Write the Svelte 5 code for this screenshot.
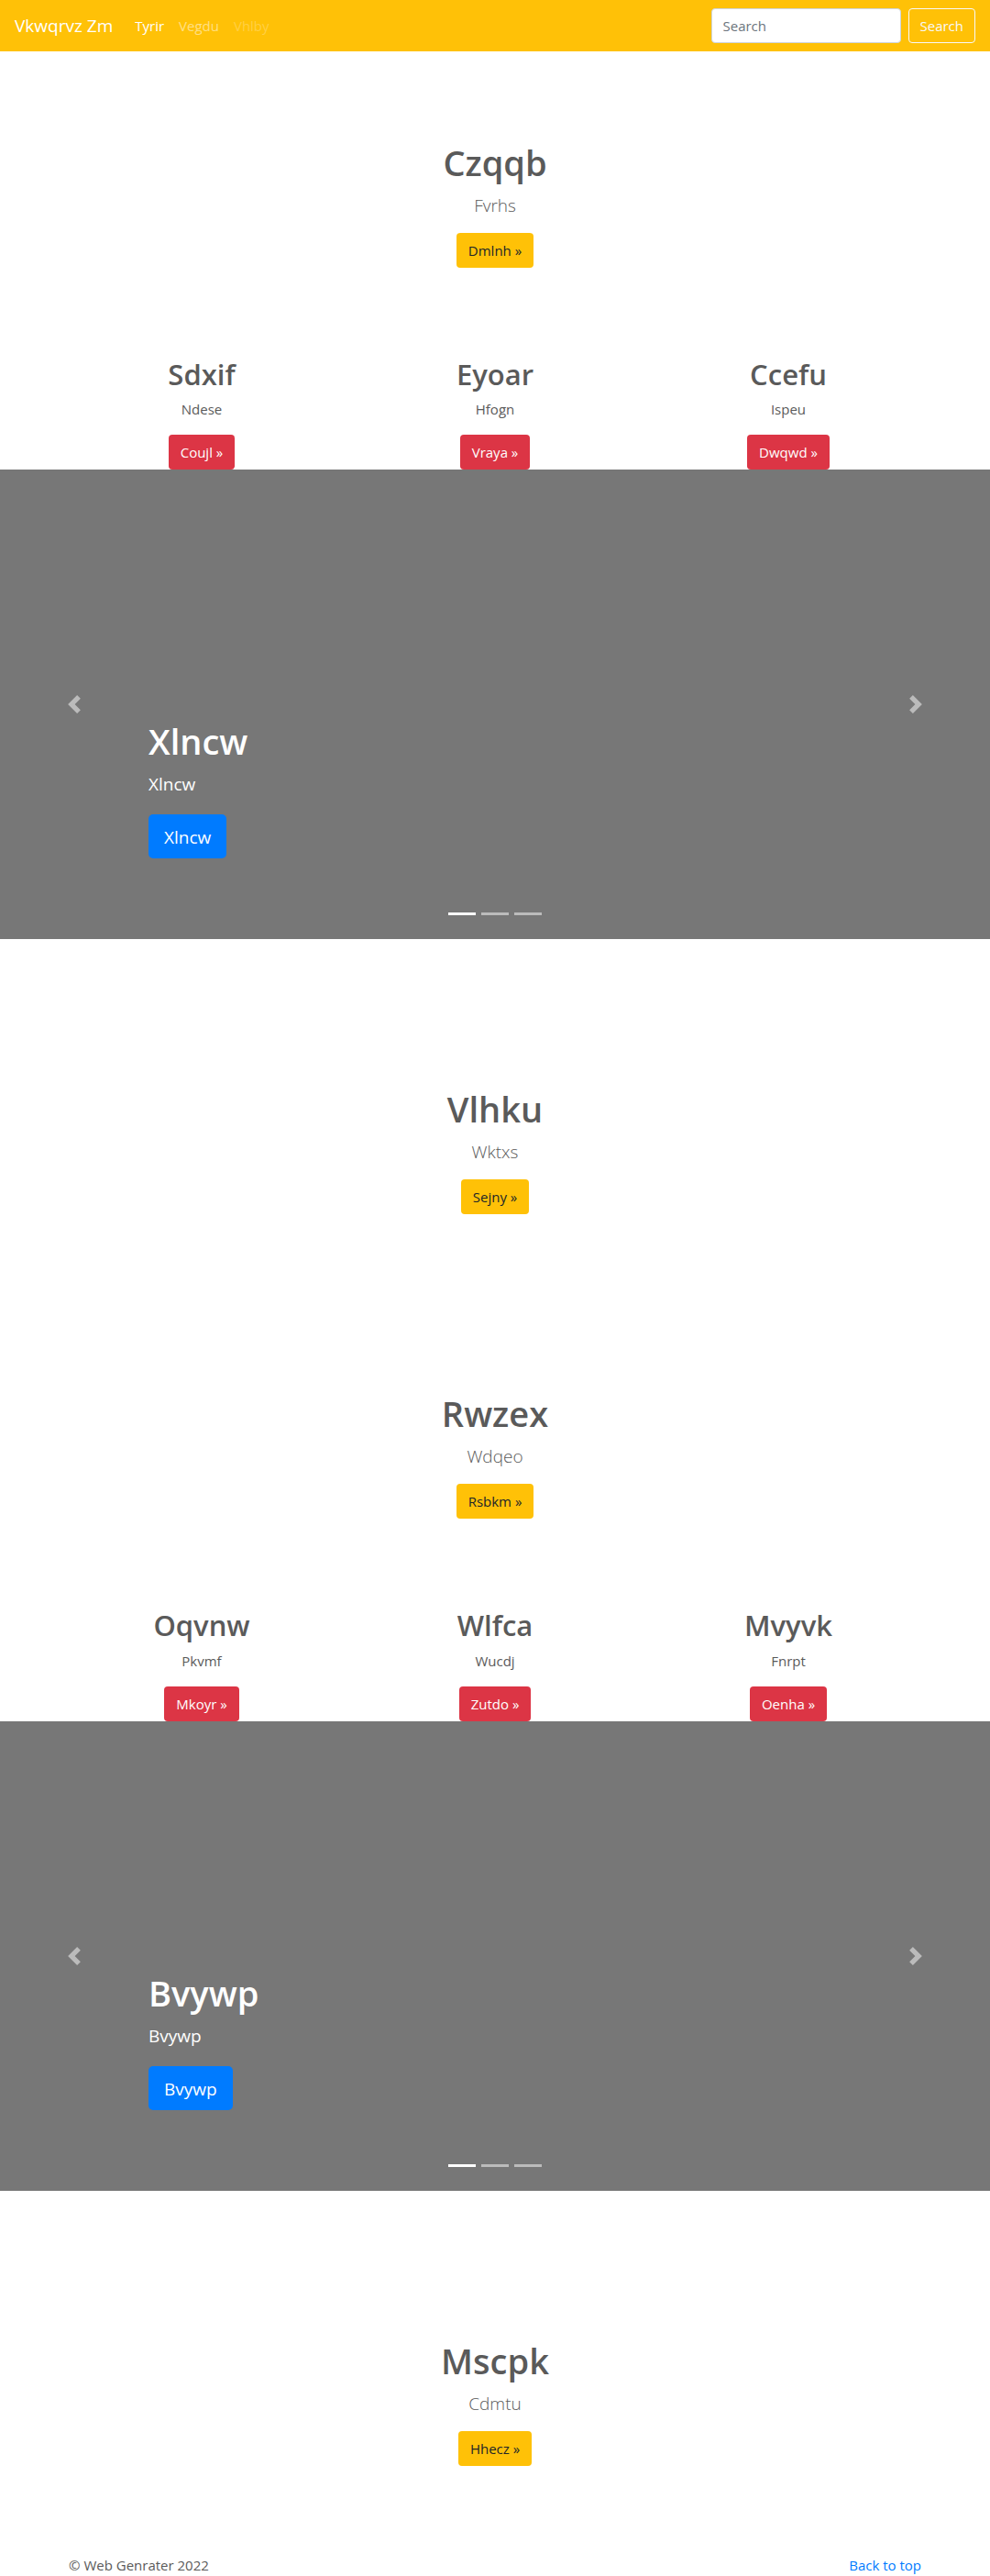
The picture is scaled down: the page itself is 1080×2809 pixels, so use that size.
<script>
  const navLinks = [
    { label: 'Tyrir', state: 'active' },
    { label: 'Vegdu', state: 'idle' },
    { label: 'Vhlby', state: 'disabled' },
  ];

  const sections = [
    { kind: 'hero', title: 'Czqqb', text: 'Fvrhs', action: 'Dmlnh' },
    {
      kind: 'columns',
      items: [
        { title: 'Sdxif', text: 'Ndese', action: 'Coujl' },
        { title: 'Eyoar', text: 'Hfogn', action: 'Vraya' },
        { title: 'Ccefu', text: 'Ispeu', action: 'Dwqwd' },
      ],
    },
    { kind: 'carousel', title: 'Xlncw' },
    { kind: 'hero', title: 'Vlhku', text: 'Wktxs', action: 'Sejny' },
    { kind: 'hero', title: 'Rwzex', text: 'Wdqeo', action: 'Rsbkm' },
    {
      kind: 'columns',
      items: [
        { title: 'Oqvnw', text: 'Pkvmf', action: 'Mkoyr' },
        { title: 'Wlfca', text: 'Wucdj', action: 'Zutdo' },
        { title: 'Mvyvk', text: 'Fnrpt', action: 'Oenha' },
      ],
    },
    { kind: 'carousel', title: 'Bvywp' },
    { kind: 'hero', title: 'Mscpk', text: 'Cdmtu', action: 'Hhecz' },
  ];
</script>

<header class="navbar">
  <a class="brand" href="#top">Vkwqrvz Zm</a>
  <nav>
    {#each navLinks as link}
      <a class="nav-link {link.state}" href="#top">{link.label}</a>
    {/each}
  </nav>
  <form class="search" onsubmit={(e) => e.preventDefault()}>
    <input type="search" placeholder="Search" aria-label="Search" />
    <button class="btn outline" type="submit">Search</button>
  </form>
</header>

<main id="top">
  {#each sections as section}
    {#if section.kind === 'hero'}
      <section class="hero">
        <h1>{section.title}</h1>
        <p class="lead">{section.text}</p>
        <a class="btn warning" href="#top">{section.action} »</a>
      </section>
    {:else if section.kind === 'columns'}
      <section class="container columns">
        {#each section.items as item}
          <div class="column">
            <h2>{item.title}</h2>
            <p>{item.text}</p>
            <a class="btn danger" href="#top">{item.action} »</a>
          </div>
        {/each}
      </section>
    {:else}
      <section class="carousel">
        <button class="control" type="button" aria-label="Previous">
          <svg viewBox="0 0 8 8" fill="#fff"><path d="M5.25 0l-4 4 4 4 1.5-1.5L4.25 4l2.5-2.5L5.25 0z" /></svg>
        </button>
        <div class="slide">
          <div class="caption">
            <h1>{section.title}</h1>
            <p>{section.title}</p>
            <a class="btn primary" href="#top">{section.title}</a>
          </div>
          <div class="indicators">
            {#each [1, 2, 3] as n}
              <button type="button" class:current={n === 1} aria-label="Slide {n}"></button>
            {/each}
          </div>
        </div>
        <button class="control" type="button" aria-label="Next">
          <svg viewBox="0 0 8 8" fill="#fff"><path d="M2.75 0l-1.5 1.5L3.75 4l-2.5 2.5L2.75 8l4-4-4-4z" /></svg>
        </button>
      </section>
    {/if}
  {/each}
</main>

<footer class="container">
  <p>© Web Genrater 2022</p>
  <a href="#top">Back to top</a>
</footer>

<style>
  :global(body) {
    color: #5a5a5a;
    background: #fff;
    font: 400 15px/24px 'Segoe UI', 'Open Sans', 'Noto Sans', sans-serif;
  }
  :global(*) {
    box-sizing: border-box;
  }
  a {
    color: #007bff;
    text-decoration: none;
  }
  h1,
  h2,
  p {
    margin: 0;
  }
  h1 {
    font-size: 38px;
    line-height: 50px;
    font-weight: 600;
    margin-bottom: 6px;
  }
  h2 {
    font-size: 31px;
    line-height: 1.3;
    font-weight: 600;
    margin-bottom: 6px;
  }
  .btn {
    display: inline-block;
    padding: 6px 12px;
    border: 1px solid transparent;
    border-radius: 4px;
    font: inherit;
    color: #fff;
    vertical-align: top;
    cursor: pointer;
  }
  .warning {
    background: #ffc107;
    color: #212529;
  }
  .danger {
    background: #dc3545;
  }
  .outline {
    background: transparent;
    border-color: #f8f9fa;
    color: #f8f9fa;
  }
  .primary {
    background: #007bff;
    padding: 9px 16px 7px;
    line-height: 30px;
    border-radius: 5px;
  }

  .navbar {
    display: flex;
    align-items: center;
    min-height: 56px;
    padding: 8px 16px;
    background: #ffc107;
  }
  .brand {
    margin-right: 16px;
    font-size: 19px;
    line-height: 30px;
    color: #fff;
  }
  nav {
    display: flex;
  }
  .nav-link {
    padding: 8px;
    color: #fff;
  }
  .idle {
    color: rgba(255, 255, 255, 0.5);
  }
  .disabled {
    color: rgba(255, 255, 255, 0.25);
  }
  .search {
    display: flex;
    gap: 8px;
    margin-left: auto;
  }
  .search input {
    width: 207px;
    height: 38px;
    padding: 6px 12px;
    border: 1px solid #ced4da;
    border-radius: 4px;
    background: #fff;
    font: inherit;
    color: #495057;
    appearance: none;
  }
  .search input::placeholder {
    color: #6c757d;
    opacity: 1;
  }

  .hero {
    padding: 96px 32px;
    text-align: center;
  }
  .lead {
    margin-bottom: 14px;
    font-size: 19px;
    line-height: 32px;
    font-weight: 300;
  }

  .container {
    max-width: 960px;
    margin: 0 auto;
  }
  .columns {
    display: grid;
    grid-template-columns: repeat(3, 1fr);
    text-align: center;
  }
  .column {
    padding: 0 15px;
  }
  .column p {
    margin-bottom: 16px;
  }

  .carousel {
    display: grid;
    grid-template-columns: 15% 1fr 15%;
    height: 512px;
    margin-bottom: 64px;
    background: #777;
    color: #fff;
  }
  .control {
    display: flex;
    align-items: center;
    justify-content: center;
    padding: 0;
    border: 0;
    background: none;
    opacity: 0.5;
    cursor: pointer;
  }
  .control svg {
    width: 20px;
    height: 20px;
  }
  .slide {
    display: flex;
    flex-direction: column;
    justify-content: flex-end;
  }
  .caption {
    font-size: 19px;
    line-height: 32px;
  }
  .caption p {
    margin-bottom: 17px;
  }
  .indicators {
    display: flex;
    justify-content: center;
    gap: 6px;
    padding: 59px 0 26px;
  }
  .indicators button {
    width: 30px;
    height: 3px;
    padding: 0;
    border: 0;
    background: #fff;
    opacity: 0.5;
    cursor: pointer;
  }
  .indicators .current {
    opacity: 1;
  }

  footer {
    display: flex;
    justify-content: space-between;
    padding: 0 15px;
  }
</style>
